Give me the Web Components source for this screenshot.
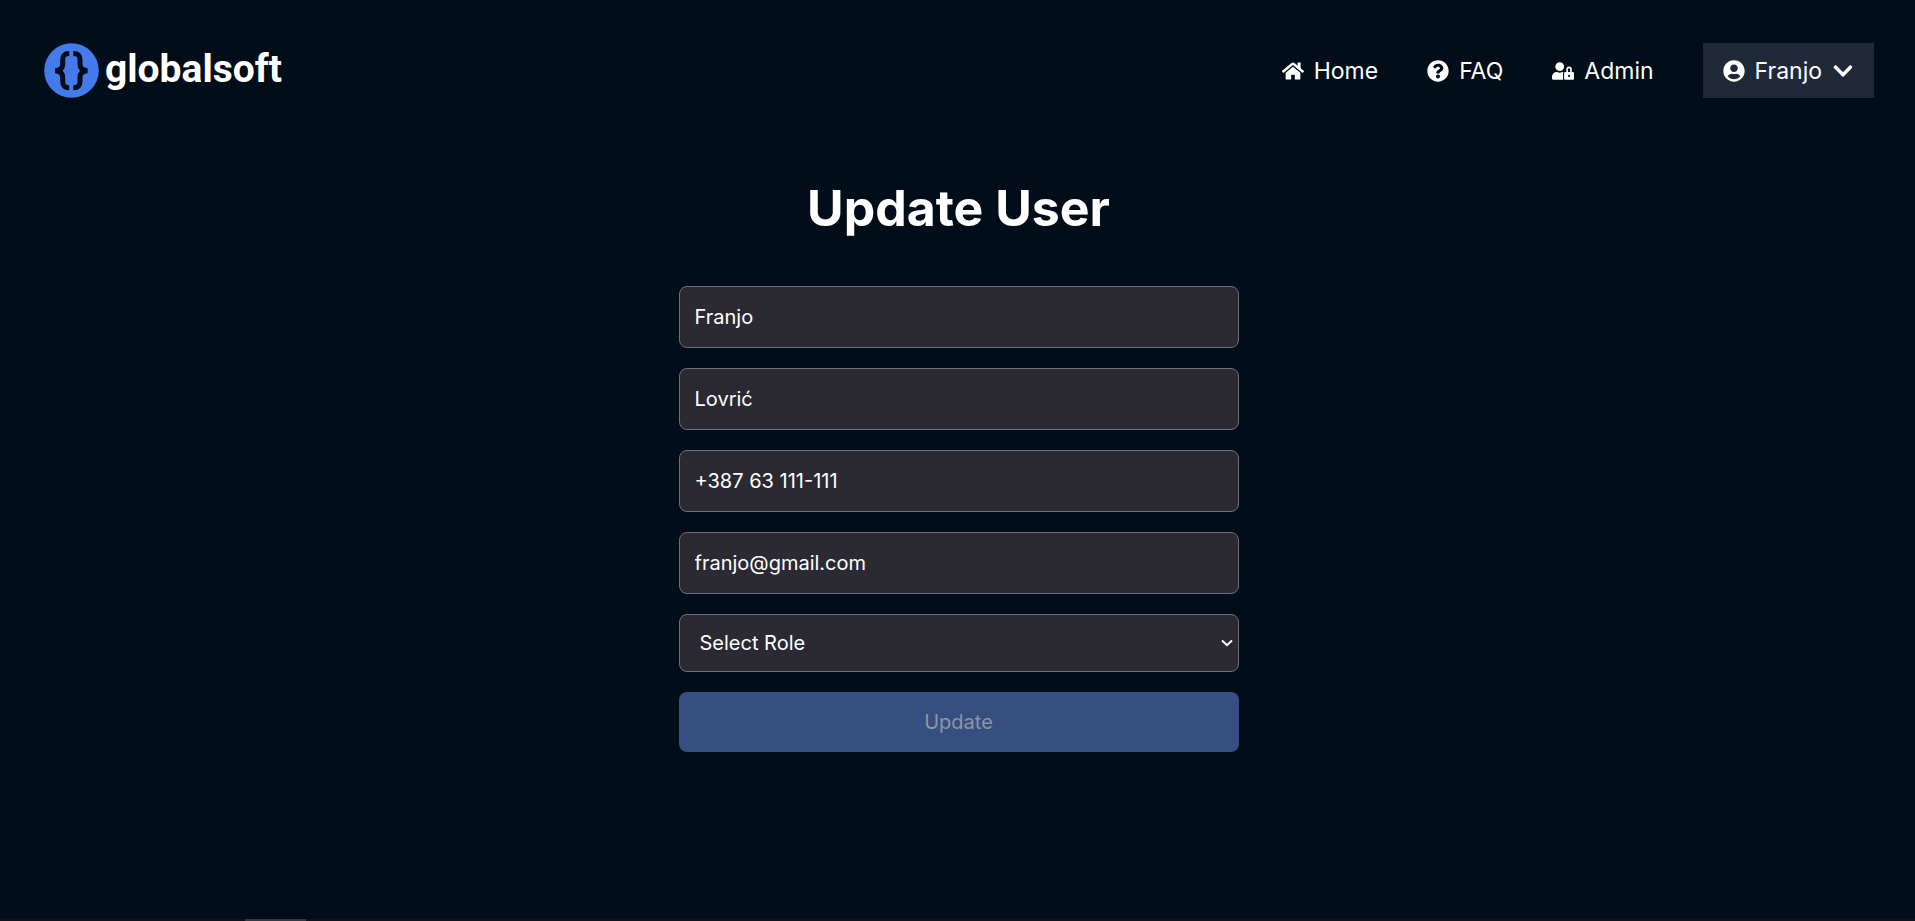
<!DOCTYPE html>
<html lang="en">
<head>
<meta charset="utf-8">
<title>globalsoft – Update User</title>
<style>
html { color-scheme: dark; background: #010d18; }
body { margin: 0; min-height: 100vh; color: #fff; font: 20px/30px Inter, "Liberation Sans", sans-serif; }
</style>
</head>
<body>
<app-page>
  <site-header slot="header">
    <site-logo slot="logo">globalsoft</site-logo>
    <nav-link icon="home" href="#home">Home</nav-link>
    <nav-link icon="question" href="#faq">FAQ</nav-link>
    <nav-link icon="userlock" href="#admin">Admin</nav-link>
    <user-menu>Franjo</user-menu>
  </site-header>
  <user-form heading="Update User">
    <text-field label="First name" value="Franjo"></text-field>
    <text-field label="Last name" value="Lovrić"></text-field>
    <text-field label="Phone" type="tel" value="+387 63 111-111"></text-field>
    <text-field label="Email" type="email" value="franjo@gmail.com"></text-field>
    <role-select label="Role"></role-select>
    <submit-button>Update</submit-button>
  </user-form>
  <scroll-strip slot="footer"></scroll-strip>
</app-page>
<script>
const ICONS = {
  home: ['0 0 576 512', 'M280.37 148.26L96 300.11V464a16 16 0 0 0 16 16l112.06-.29a16 16 0 0 0 15.92-16V368a16 16 0 0 1 16-16h64a16 16 0 0 1 16 16v95.64a16 16 0 0 0 16 16.05L464 480a16 16 0 0 0 16-16V300L295.67 148.26a12.19 12.19 0 0 0-15.3 0zM571.6 251.47L488 182.56V44.05a12 12 0 0 0-12-12h-56a12 12 0 0 0-12 12v72.61L318.47 43a48 48 0 0 0-61 0L4.34 251.47a12 12 0 0 0-1.6 16.9l25.5 31A12 12 0 0 0 45.15 301l235.22-193.74a12.19 12.19 0 0 1 15.3 0L530.9 301a12 12 0 0 0 16.9-1.6l25.5-31a12 12 0 0 0-1.7-16.93z'],
  question: ['0 0 512 512', 'M504 256c0 136.997-111.043 248-248 248S8 392.997 8 256C8 119.083 119.043 8 256 8s248 111.083 248 248zM262.655 90c-54.497 0-89.255 22.957-116.549 63.758-3.536 5.286-2.353 12.415 2.715 16.258l34.699 26.31c5.205 3.947 12.621 3.008 16.665-2.122 17.864-22.658 30.113-35.797 57.303-35.797 20.429 0 45.698 13.148 45.698 32.958 0 14.976-12.363 22.667-32.534 33.976C247.128 238.528 216 254.941 216 296v4c0 6.627 5.373 12 12 12h56c6.627 0 12-5.373 12-12v-1.333c0-28.462 83.186-29.647 83.186-106.667 0-58.002-60.165-102-116.531-102zM256 338c-25.365 0-46 20.635-46 46 0 25.364 20.635 46 46 46s46-20.636 46-46c0-25.365-20.635-46-46-46z'],
  userlock: ['0 0 640 512', 'M224 256A128 128 0 1 0 96 128a128 128 0 0 0 128 128zm96 64a63.08 63.08 0 0 1 8.1-30.5c-4.8-.5-9.5-1.5-14.5-1.5h-16.7a174.08 174.08 0 0 1-145.8 0h-16.7A134.43 134.43 0 0 0 0 422.4V464a48 48 0 0 0 48 48h280.9a63.54 63.54 0 0 1-8.9-32zm288-32h-32v-80a80 80 0 0 0-160 0v80h-32a32 32 0 0 0-32 32v160a32 32 0 0 0 32 32h224a32 32 0 0 0 32-32V320a32 32 0 0 0-32-32zM496 432a32 32 0 1 1 32-32 32 32 0 0 1-32 32zm32-144h-64v-80a32 32 0 0 1 64 0z'],
  user: ['0 0 496 512', 'M248 8C111 8 0 119 0 256s111 248 248 248 248-111 248-248S385 8 248 8zm0 96c48.6 0 88 39.4 88 88s-39.4 88-88 88-88-39.4-88-88 39.4-88 88-88zm0 344c-58.7 0-111.3-26.6-146.5-68.2 18.8-35.4 55.6-59.8 98.5-59.8 2.4 0 4.8.4 7.1 1.1 13 4.2 26.6 6.9 40.9 6.9 14.3 0 28-2.7 40.9-6.9 2.3-.7 4.7-1.1 7.1-1.1 42.9 0 79.7 24.4 98.5 59.8C359.3 421.4 306.7 448 248 448z'],
  chevron: ['0 0 448 512', 'M207.029 381.476L12.686 187.132c-9.373-9.373-9.373-24.569 0-33.941l22.667-22.667c9.357-9.357 24.522-9.375 33.901-.04L224 284.505l154.745-154.021c9.379-9.335 24.544-9.317 33.901.04l22.667 22.667c9.373 9.373 9.373 24.569 0 33.941L240.971 381.476c-9.373 9.372-24.569 9.372-33.942 0z']
};
const icon = name => `<svg viewBox="${ICONS[name][0]}" fill="currentColor" aria-hidden="true"><path d="${ICONS[name][1]}"/></svg>`;

function define(tag, view) {
  customElements.define(tag, class extends HTMLElement {
    constructor() { super(); this.attachShadow({ mode: 'open' }); }
    connectedCallback() {
      const t = document.createElement('template');
      t.innerHTML = '<style>*{box-sizing:border-box}</style>' + view(this);
      this.shadowRoot.replaceChildren(t.content.cloneNode(true));
    }
  });
}

define('app-page', () => `
<style>
:host { display: flex; flex-direction: column; min-height: 100vh; }
main { flex: 1; padding: 0 1px 0 3px; }
</style>
<slot name="header"></slot>
<main><slot></slot></main>
<slot name="footer"></slot>`);

define('site-header', () => `
<style>
:host { display: block; padding: 43px 41px 40px 44px; }
header, nav { display: flex; align-items: center; }
header { justify-content: space-between; }
nav { gap: 49px; }
</style>
<header><slot name="logo"></slot><nav aria-label="Main"><slot></slot></nav></header>`);

define('site-logo', () => `
<style>
:host { display: block; }
a { display: flex; align-items: center; gap: 6px; color: #fff; text-decoration: none; font: bold 39px/48px Roboto, "Liberation Sans", sans-serif; }
svg { width: 55px; height: 55px; flex: none; }
span { padding-bottom: 4px; }
</style>
<a href="#home">
<svg viewBox="0 0 55 55" aria-hidden="true">
<circle cx="27.5" cy="27.5" r="27.3" fill="#457aec"/>
<g fill="none" stroke="#010d18" stroke-width="5"><path d="M25.2 10.500C20.500 10.500 18.700 12.500 18.700 17V21C18.700 25 16.500 27.400 11.200 27.700C16.500 28 18.700 30.500 18.700 34.500V38.500C18.700 43 20.500 44.800 25.200 44.800"/><path d="M29.300 10.500C34 10.500 36 12.500 36 17V21C36 25 38.200 27.400 43.500 27.700C38.200 28 36 30.500 36 34.500V38.500C36 43 34 44.800 29.300 44.800"/></g>
</svg><span><slot></slot></span></a>`);

define('nav-link', el => `
<style>
:host { display: block; }
a { display: flex; align-items: center; gap: 10px; color: #fff; text-decoration: none; font-size: 23px; line-height: 33px; }
svg { width: 22px; height: 22px; }
span { padding-top: 2px; }
</style>
<a href="${el.getAttribute('href')}">${icon(el.getAttribute('icon'))}<span><slot></slot></span></a>`);

define('user-menu', () => `
<style>
:host { display: block; }
button { display: flex; align-items: center; gap: 10px; padding: 10px 20px; border: 0; background: #1f2937; color: #fff; font: inherit; font-size: 23px; line-height: 33px; }
svg { width: 22px; height: 22px; }
span { padding-top: 2px; }
</style>
<button type="button" aria-haspopup="menu">${icon('user')}<span><slot></slot></span>${icon('chevron')}</button>`);

define('user-form', el => `
<style>
:host { display: block; max-width: 560px; margin: 40px auto; }
h1 { margin: 0 0 48px; font-size: 50px; line-height: 60px; font-weight: 700; text-align: center; }
form { display: flex; flex-direction: column; gap: 20px; }
</style>
<h1>${el.getAttribute('heading')}</h1>
<form><slot></slot></form>`);

define('text-field', el => `
<style>
:host { display: block; }
input { display: block; width: 100%; height: 62px; padding: 15px; border: 1px solid #6b7280; border-radius: 8px; background: #2b2a33; color: #fff; font: inherit; }
</style>
<input aria-label="${el.getAttribute('label')}" type="${el.getAttribute('type') || 'text'}" value="${el.getAttribute('value')}">`);

define('role-select', el => `
<style>
:host { display: grid; align-items: center; }
select, svg { grid-area: 1 / 1; }
select { appearance: none; width: 100%; height: 58px; padding: 0 20px; border: 1px solid #6b7280; border-radius: 8px; background: #2b2a33; color: #fff; font: inherit; }
svg { justify-self: end; width: 12px; height: 8px; margin-right: 6px; pointer-events: none; }
</style>
<select aria-label="${el.getAttribute('label')}"><option>Select Role</option><option>Admin</option><option>User</option></select>
<svg viewBox="0 0 12 8" fill="none" stroke="#fff" stroke-width="2" aria-hidden="true"><path d="M1 1.500L6 6.200L11 1.500"/></svg>`);

define('submit-button', () => `
<style>
:host { display: block; }
button { display: block; width: 100%; padding: 15px; border: 0; border-radius: 8px; background: #374f80; color: #8e95a5; font: inherit; }
</style>
<button type="submit" disabled><slot></slot></button>`);

define('scroll-strip', () => `
<style>
:host { display: block; height: 2px; padding-left: 245px; background: #121214; }
div { width: 61px; height: 2px; background: #38383b; }
</style>
<div></div>`);
</script>
</body>
</html>
